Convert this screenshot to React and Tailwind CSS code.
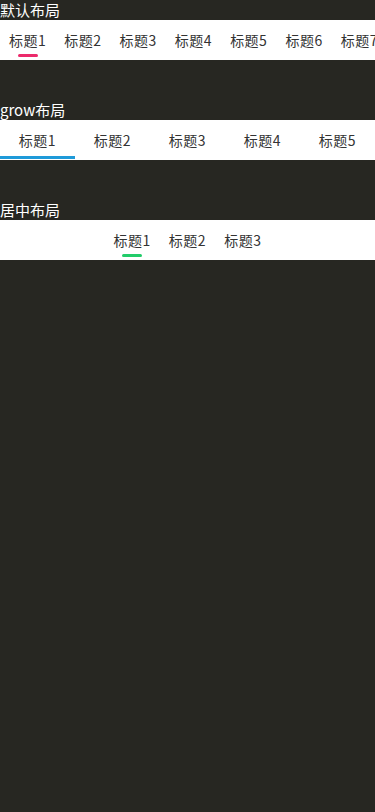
import React, { useState } from 'react';

const font = { fontFamily: '"Noto Sans CJK SC", "Noto Sans", sans-serif' };

const DefaultTabs = ({ count, color }) => {
  const [active, setActive] = useState(0);
  const tabs = Array.from({ length: count }, (_, i) => `标题${i + 1}`);

  return (
    <div className="flex h-10 items-stretch overflow-hidden bg-white">
      {tabs.map((t, i) => (
        <button
          key={t}
          onClick={() => setActive(i)}
          className="relative flex shrink-0 items-center px-[9px] text-[14px] tracking-[0.5px] text-[#333]"
        >
          {t}
          {active === i && (
            <span className={`absolute bottom-[3px] left-1/2 h-[3px] w-5 -translate-x-1/2 rounded-full ${color}`} />
          )}
        </button>
      ))}
    </div>
  );
};

const GrowTabs = ({ count }) => {
  const [active, setActive] = useState(0);
  const tabs = Array.from({ length: count }, (_, i) => `标题${i + 1}`);

  return (
    <div className="flex h-10 bg-white">
      {tabs.map((t, i) => (
        <button
          key={t}
          onClick={() => setActive(i)}
          className="relative flex flex-1 items-center justify-center text-[14px] tracking-[0.5px] text-[#333]"
        >
          {t}
          {active === i && <span className="absolute bottom-px left-0 right-0 h-[3px] bg-[#1e9ad9]" />}
        </button>
      ))}
    </div>
  );
};

const CenterTabs = ({ count }) => {
  const [active, setActive] = useState(0);
  const tabs = Array.from({ length: count }, (_, i) => `标题${i + 1}`);

  return (
    <div className="flex h-10 justify-center bg-white">
      {tabs.map((t, i) => (
        <button
          key={t}
          onClick={() => setActive(i)}
          className="relative flex items-center px-[9px] text-[14px] tracking-[0.5px] text-[#333]"
        >
          {t}
          {active === i && (
            <span className="absolute bottom-[3px] left-1/2 h-[3px] w-5 -translate-x-1/2 rounded-full bg-[#22cc6a]" />
          )}
        </button>
      ))}
    </div>
  );
};

export default function App() {
  return (
    <div className="min-h-[812px] bg-[#272722]" style={font}>
      <div className="h-5 text-[15px] leading-5 text-white">默认布局</div>
      <DefaultTabs count={7} color="bg-[#ec2a6b]" />

      <div className="mt-10 h-5 text-[15px] leading-5 text-white">grow布局</div>
      <GrowTabs count={5} />

      <div className="mt-10 h-5 text-[15px] leading-5 text-white">居中布局</div>
      <CenterTabs count={3} />
    </div>
  );
}
